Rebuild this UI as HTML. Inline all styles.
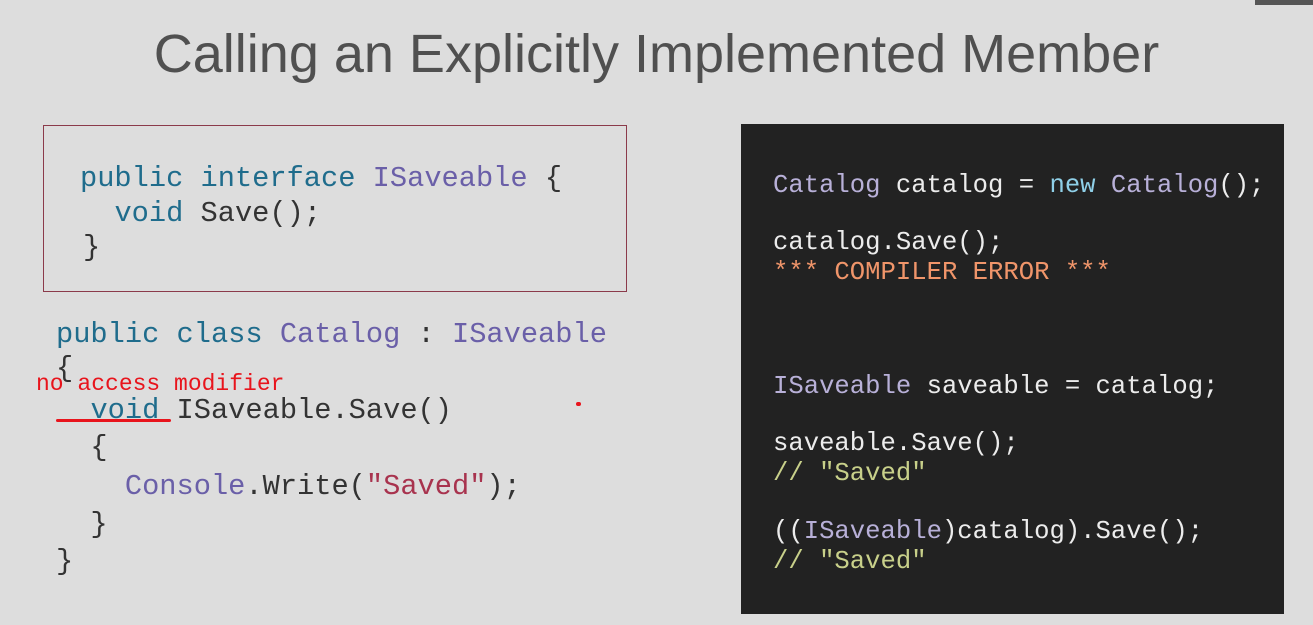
<!DOCTYPE html>
<html><head><meta charset="utf-8"><style>
body{margin:0;width:1313px;height:625px;background:#dddddd;position:relative;overflow:hidden;font-family:"Liberation Mono",monospace}
.t{position:absolute;left:0;width:1313px;top:27px;text-align:center;font-family:"Liberation Sans",sans-serif;font-size:54px;color:#505050;line-height:1;}
.l{position:absolute;white-space:pre;font-size:28.7px;line-height:1;color:#333}
.r{position:absolute;white-space:pre;font-size:25.6px;line-height:1;color:#ececec}
.k{color:#1f6c8c}.p{color:#6a5fa8}.s{color:#a8334e}
.rt{color:#b8b0d8}.rn{color:#8fd0e8}.re{color:#f0956a}.rc{color:#c8d08a}
</style></head><body>
<div style="position:absolute;left:1255px;top:0;width:58px;height:5px;background:#555"></div>
<div class="t">Calling an Explicitly Implemented Member</div>
<div style="position:absolute;left:43px;top:125px;width:582px;height:165px;border:1px solid #8b3a4a"></div>
<div class="l" style="left:80px;top:165px"><span class="k">public interface</span> <span class="p">ISaveable</span> {</div>
<div class="l" style="left:80px;top:200px">  <span class="k">void</span> Save();</div>
<div class="l" style="left:83px;top:234px">}</div>
<div class="l" style="left:56px;top:321px"><span class="k">public class</span> <span class="p">Catalog</span> : <span class="p">ISaveable</span></div>
<div class="l" style="left:56px;top:355px">{</div>
<div style="position:absolute;left:36px;top:373px;font-size:23px;color:#e8141c;white-space:pre;line-height:1">no access modifier</div>
<div class="l" style="left:56px;top:397px">  <span class="k">void</span> ISaveable.Save()</div>
<div style="position:absolute;left:56px;top:419px;width:115px;height:3px;background:#e8141c;border-radius:2px"></div>
<div style="position:absolute;left:576px;top:402px;width:5px;height:4px;background:#e8141c;border-radius:2px"></div>
<div class="l" style="left:56px;top:434px">  {</div>
<div class="l" style="left:56px;top:473px">    <span class="p">Console</span>.Write(<span class="s">"Saved"</span>);</div>
<div class="l" style="left:56px;top:511px">  }</div>
<div class="l" style="left:56px;top:548px">}</div>
<div style="position:absolute;left:741px;top:124px;width:543px;height:490px;background:#222"></div>
<div class="r" style="left:773px;top:173px"><span class="rt">Catalog</span> catalog = <span class="rn">new</span> <span class="rt">Catalog</span>();</div>
<div class="r" style="left:773px;top:230px">catalog.Save();</div>
<div class="r re" style="left:773px;top:260px">*** COMPILER ERROR ***</div>
<div class="r" style="left:773px;top:374px"><span class="rt">ISaveable</span> saveable = catalog;</div>
<div class="r" style="left:773px;top:431px">saveable.Save();</div>
<div class="r rc" style="left:773px;top:461px">// "Saved"</div>
<div class="r" style="left:773px;top:519px">((<span class="rt">ISaveable</span>)catalog).Save();</div>
<div class="r rc" style="left:773px;top:549px">// "Saved"</div>
</body></html>
